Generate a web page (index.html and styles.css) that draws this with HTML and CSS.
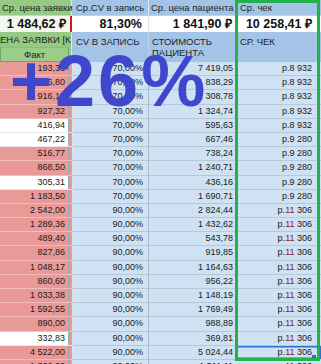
FILE: index.html
```html
<!DOCTYPE html>
<html lang="ru">
<head>
<meta charset="utf-8">
<title>Таблица</title>
<link rel="stylesheet" href="styles.css">
</head>
<body>
<div class="sheet">
  <div class="row r1">
    <div class="c a">Ср. цена заявки</div>
    <div class="c b">Ср.CV в запись</div>
    <div class="c cc">Ср. цена пациента</div>
    <div class="c d">Ср. чек</div>
  </div>
  <div class="row r2">
    <div class="c a">1 484,62 ₽</div>
    <div class="c b">81,30%</div>
    <div class="c cc">1 841,90 ₽</div>
    <div class="c d">10 258,41 ₽</div>
  </div>
  <div class="row r3">
    <div class="a3">
      <div class="a3t">ЦЕНА ЗАЯВКИ [КЛИНИКА]</div>
      <div class="fact">Факт</div>
    </div>
    <div class="c b">CV В ЗАПИСЬ</div>
    <div class="c cc">СТОИМОСТЬ<br>ПАЦИЕНТА</div>
    <div class="c d">СР. ЧЕК</div>
  </div>
  <div class="data">
    <div class="row dr"><div class="c a">5 193,33</div><div class="c b">70,00%</div><div class="c cc">7 419,05</div><div class="c d">р.8 932</div></div>
    <div class="row dr"><div class="c a">1 286,80</div><div class="c b">70,00%</div><div class="c cc">1 838,29</div><div class="c d">р.8 932</div></div>
    <div class="row dr"><div class="c a">916,15</div><div class="c b">70,00%</div><div class="c cc">1 308,78</div><div class="c d">р.8 932</div></div>
    <div class="row dr"><div class="c a">927,32</div><div class="c b">70,00%</div><div class="c cc">1 324,74</div><div class="c d">р.8 932</div></div>
    <div class="row dr"><div class="c a w">416,94</div><div class="c b">70,00%</div><div class="c cc">595,63</div><div class="c d">р.8 932</div></div>
    <div class="row dr"><div class="c a w">467,22</div><div class="c b">70,00%</div><div class="c cc">667,46</div><div class="c d">р.9 280</div></div>
    <div class="row dr"><div class="c a">516,77</div><div class="c b">70,00%</div><div class="c cc">738,24</div><div class="c d">р.9 280</div></div>
    <div class="row dr"><div class="c a">868,50</div><div class="c b">70,00%</div><div class="c cc">1 240,71</div><div class="c d">р.9 280</div></div>
    <div class="row dr"><div class="c a w">305,31</div><div class="c b">70,00%</div><div class="c cc">436,16</div><div class="c d">р.9 280</div></div>
    <div class="row dr"><div class="c a">1 183,50</div><div class="c b">70,00%</div><div class="c cc">1 690,71</div><div class="c d">р.9 280</div></div>
    <div class="row dr"><div class="c a">2 542,00</div><div class="c b">90,00%</div><div class="c cc">2 824,44</div><div class="c d">р.<span class="red">11</span> 306</div></div>
    <div class="row dr"><div class="c a">1 289,36</div><div class="c b">90,00%</div><div class="c cc">1 432,62</div><div class="c d">р.<span class="red">11</span> 306</div></div>
    <div class="row dr"><div class="c a">489,40</div><div class="c b">90,00%</div><div class="c cc">543,78</div><div class="c d">р.<span class="red">11</span> 306</div></div>
    <div class="row dr"><div class="c a">827,86</div><div class="c b">90,00%</div><div class="c cc">919,85</div><div class="c d">р.<span class="red">11</span> 306</div></div>
    <div class="row dr"><div class="c a">1 048,17</div><div class="c b">90,00%</div><div class="c cc">1 164,63</div><div class="c d">р.<span class="red">11</span> 306</div></div>
    <div class="row dr"><div class="c a">860,60</div><div class="c b">90,00%</div><div class="c cc">956,22</div><div class="c d">р.<span class="red">11</span> 306</div></div>
    <div class="row dr"><div class="c a">1 033,38</div><div class="c b">90,00%</div><div class="c cc">1 148,19</div><div class="c d">р.<span class="red">11</span> 306</div></div>
    <div class="row dr"><div class="c a">1 592,55</div><div class="c b">90,00%</div><div class="c cc">1 769,49</div><div class="c d">р.<span class="red">11</span> 306</div></div>
    <div class="row dr"><div class="c a">890,00</div><div class="c b">90,00%</div><div class="c cc">988,89</div><div class="c d">р.<span class="red">11</span> 306</div></div>
    <div class="row dr"><div class="c a w">332,83</div><div class="c b">90,00%</div><div class="c cc">369,81</div><div class="c d">р.<span class="red">11</span> 306</div></div>
    <div class="row dr"><div class="c a">4 522,00</div><div class="c b">90,00%</div><div class="c cc">5 024,44</div><div class="c d sel">р.<span class="red">11</span> 306</div></div>
    <div class="row dr"><div class="c a">1 360,00</div><div class="c b">90,00%</div><div class="c cc">1 511,11</div><div class="c d">р.<span class="red">11</span> 306</div></div>
  </div>
  <div class="frame"></div>
  <div class="big">+26%</div>
</div>
</body>
</html>
```

FILE: styles.css
```css
* { box-sizing: border-box; margin: 0; padding: 0; }
html, body { margin: 0; background: #fff; }
body {
  width: 321px;
  height: 364px;
  overflow: hidden;
  font-family: "Liberation Sans", Arial, sans-serif;
  color: #1e1e1e;
}
.sheet { position: relative; width: 321px; height: 364px; overflow: hidden; }

.row { display: grid; grid-template-columns: 73px 76px 86px 86px; }
.c { white-space: nowrap; overflow: hidden; }

/* row 1: titles */
.r1 { height: 16px; }
.r1 .c {
  font-size: 9.5px;
  line-height: 15px;
  padding-left: 2px;
  border-bottom: 1px solid #c3d2e2;
}
.r1 .a { background: linear-gradient(to right, #94ca84 0 71px, #dde6ee 71px 72px, #a4c4e7 72px); }
.r1 .b { background: #a4c4e7; padding-left: 3px; border-right: 1px solid #d6e2ee; }
.r1 .cc { background: #a4c4e7; padding-left: 2px; }
.r1 .d { background: #a4c4e7; padding-left: 5px; }

/* row 2: big values */
.r2 { height: 16px; }
.r2 .c {
  font-size: 12.5px;
  font-weight: bold;
  line-height: 16px;
  text-align: right;
  background: #fff;
  color: #111;
}
.r2 .a { padding-right: 7px; background: linear-gradient(to right, #f3f8ef 0 70px, #cc2020 70px 72px, #fff 72px); }
.r2 .b { padding-right: 6px; border-right: 1px solid #dfe5ec; }
.r2 .cc { padding-right: 3px; }
.r2 .d { padding-right: 9px; }

/* row 3: column headers */
.r3 { height: 30px; }
.a3 {
  display: grid;
  grid-template-rows: 15px 15px;
  background: linear-gradient(to right, #94ca84 0 71px, #dde6ee 71px 72px, #a4c4e7 72px);
}
.a3t {
  font-size: 9.5px;
  line-height: 15px;
  white-space: nowrap;
  overflow: hidden;
  width: 71px;
  text-indent: -7px;
}
.fact {
  width: 69px;
  font-size: 9.5px;
  line-height: 13px;
  text-align: center;
  background: #9acd8a;
  border: 1px solid #6fa664;
  border-top-color: #8cbd7e;
}
.r3 .c {
  background: #a4c4e7;
  font-size: 9.5px;
  line-height: 11px;
  padding-top: 4px;
}
.r3 .b { padding-left: 3px; border-right: 1px solid #bfd2e6; }
.r3 .cc { padding-left: 3px; }
.r3 .d { padding-left: 5px; }

/* data rows */
.dr { height: 14.2px; }
.dr .c {
  font-size: 9px;
  line-height: 13px;
  text-align: right;
  color: #202020;
}
.dr .a {
  --bg: #ea9999;
  padding-right: 8px;
  background: linear-gradient(to right, var(--bg) 0 68px, #9fb0ac 68px 70px, #ea9999 70px 72px, #d7e3ef 72px);
  border-bottom: 1px solid #f1bcbc;
}
.dr .a.w { --bg: #ffffff; border-bottom-color: #e8e8e8; }
.dr .b {
  background: #cfe2f3;
  padding-right: 5px;
  border-right: 1px solid #a9b9c9;
  border-bottom: 1px solid #b7c8d9;
}
.dr .cc {
  background: #cfe2f3;
  padding-right: 2px;
  border-bottom: 1px solid #b7c8d9;
}
.dr .d {
  background: #cfe2f3;
  padding-right: 9px;
  border-bottom: 1px solid #b7c8d9;
}
.red { color: #8a1818; }

.sel { position: relative; box-shadow: inset 0 0 0 1px #2f6fd6, inset 0 0 0 2px #7ea6e6; }
.sel::after {
  content: "";
  position: absolute;
  right: 5px;
  bottom: 0;
  width: 4px;
  height: 4px;
  background: #2f6fd6;
}

/* overlays */
.frame {
  position: absolute;
  left: 235px;
  top: 0;
  width: 85px;
  height: 361px;
  border: 3px solid #22b14c;
}
.big {
  position: absolute;
  left: 10px;
  top: 45px;
  font-family: "Liberation Sans", Arial, sans-serif;
  font-weight: bold;
  font-size: 72px;
  line-height: 1;
  letter-spacing: 3px;
  color: #3f48cc;
  white-space: nowrap;
}
```
